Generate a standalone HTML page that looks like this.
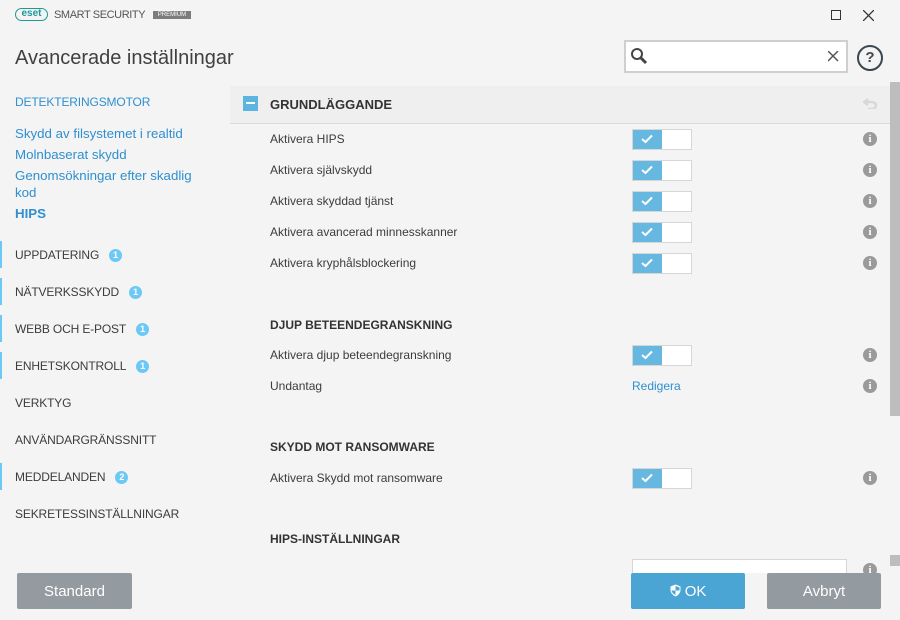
<!DOCTYPE html><html><head><meta charset="utf-8"><style>
*{margin:0;padding:0;box-sizing:border-box}
body{width:900px;height:620px;background:#f4f4f4;font-family:"Liberation Sans",sans-serif;position:relative;overflow:hidden;color:#3c3c3c}
.a{position:absolute;white-space:nowrap}
.nav{font-size:12px;color:#3c3c3c;letter-spacing:-0.15px}
.lk{font-size:13.3px;letter-spacing:0}
.blue{color:#2f8fd0}
.bar{position:absolute;left:0;width:2px;height:27px;background:#6cc8f5}
.badge{display:inline-block;width:13px;height:13px;border-radius:50%;background:#6cc8f5;color:#fff;font-size:9px;font-weight:bold;text-align:center;line-height:13px;vertical-align:1px;margin-left:10px;letter-spacing:0}
.lbl{font-size:12px;left:270px;color:#3c3c3c}
.tg{position:absolute;left:632px;width:60px;height:21px;border:1px solid #d6d6d6;background:#fff}
.tg i{position:absolute;left:0;top:0;width:29px;height:19px;background:#66b8e0}
.tg svg{position:absolute;left:8px;top:4px}
.info{position:absolute;left:863px;width:14px;height:14px;border-radius:50%;background:#9a9a9a;color:#fff;font:bold 11px "Liberation Serif",serif;text-align:center;line-height:14px}
.sec{font-size:12px;font-weight:bold;left:270px;color:#333}
.btn{position:absolute;top:573px;height:36px;color:#fff;font-size:15px;text-align:center;line-height:38px;border-radius:2px}
</style></head><body>
<div class="a" style="left:15px;top:8px;width:33px;height:13px;border:1.5px solid #1d9a98;border-radius:7px;color:#1d9a98;font:bold 10px/10px 'Liberation Sans';text-align:center">eset</div>
<div class="a" style="left:54px;top:9px;font-size:11px;color:#555;letter-spacing:-0.4px">SMART SECURITY</div>
<div class="a" style="left:153px;top:11px;width:38px;height:8px;background:#7c7c7c;color:#fff;font-size:6px;line-height:8px;text-align:center">PREMIUM</div>
<div class="a" style="left:831px;top:10px;width:10px;height:10px;border:1.3px solid #333"></div>
<svg class="a" style="left:863px;top:10px" width="11" height="11"><path d="M0 0L11 11M11 0L0 11" stroke="#333" stroke-width="1.3"/></svg>
<div class="a" style="left:15px;top:47px;font-size:20px;color:#404040">Avancerade inställningar</div>
<div class="a" style="left:624px;top:40px;width:224px;height:33px;border:2px solid #cfcfcf;background:#fff"></div>
<svg class="a" style="left:630px;top:47px" width="18" height="18"><circle cx="7" cy="7" r="5" fill="none" stroke="#444" stroke-width="2"/><path d="M11 11L16 16" stroke="#444" stroke-width="3"/></svg>
<svg class="a" style="left:828px;top:51px" width="11" height="11"><path d="M0 0L10 10M10 0L0 10" stroke="#555" stroke-width="1.5"/></svg>
<div class="a" style="left:857px;top:45px;width:26px;height:26px;border:2px solid #3a4650;border-radius:50%;text-align:center;font:bold 15px/22px 'Liberation Sans';color:#3a4650">?</div>

<div class="a nav blue" style="left:15px;top:95px">DETEKTERINGSMOTOR</div>
<div class="a nav blue lk" style="left:15px;top:126px">Skydd av filsystemet i realtid</div>
<div class="a nav blue lk" style="left:15px;top:147px">Molnbaserat skydd</div>
<div class="a nav blue lk" style="left:15px;top:168px">Genomsökningar efter skadlig</div>
<div class="a nav blue lk" style="left:15px;top:185px">kod</div>
<div class="a nav blue lk" style="left:15px;top:206px;font-weight:bold">HIPS</div>
<div class="bar" style="top:241px"></div><div class="a nav" style="left:15px;top:248px">UPPDATERING<span class="badge">1</span></div>
<div class="bar" style="top:278px"></div><div class="a nav" style="left:15px;top:285px">NÄTVERKSSKYDD<span class="badge">1</span></div>
<div class="bar" style="top:315px"></div><div class="a nav" style="left:15px;top:322px">WEBB OCH E-POST<span class="badge">1</span></div>
<div class="bar" style="top:352px"></div><div class="a nav" style="left:15px;top:359px">ENHETSKONTROLL<span class="badge">1</span></div>
<div class="a nav" style="left:15px;top:396px">VERKTYG</div>
<div class="a nav" style="left:15px;top:433px">ANVÄNDARGRÄNSSNITT</div>
<div class="bar" style="top:463px"></div><div class="a nav" style="left:15px;top:470px">MEDDELANDEN<span class="badge">2</span></div>
<div class="a nav" style="left:15px;top:507px">SEKRETESSINSTÄLLNINGAR</div>

<div class="a" style="left:230px;top:86px;width:660px;height:38px;background:#efefef;border-bottom:1px solid #dcdcdc"></div>
<div class="a" style="left:243px;top:96px;width:15px;height:15px;background:#5cb4e0"><div style="position:absolute;left:3px;top:6px;width:9px;height:2px;background:#fff"></div></div>
<div class="a" style="left:270px;top:97px;font-size:13px;font-weight:bold;color:#333">GRUNDLÄGGANDE</div>
<svg class="a" style="left:863px;top:98px" width="14" height="11"><path d="M5 1L1 4L5 7M1 4H9A4 3.5 0 0 1 9 11H5" fill="none" stroke="#d8d8d8" stroke-width="2.5"/></svg>
<div class="a" style="left:890px;top:82px;width:10px;height:334px;background:#bdbdbd"></div>
<div class="a" style="left:890px;top:555px;width:10px;height:11px;background:#bdbdbd"></div>

<div class="a lbl" style="top:132px">Aktivera HIPS</div>
<div class="a lbl" style="top:163px">Aktivera självskydd</div>
<div class="a lbl" style="top:194px">Aktivera skyddad tjänst</div>
<div class="a lbl" style="top:225px">Aktivera avancerad minnesskanner</div>
<div class="a lbl" style="top:256px">Aktivera kryphålsblockering</div>
<div class="a sec" style="top:318px">DJUP BETEENDEGRANSKNING</div>
<div class="a lbl" style="top:348px">Aktivera djup beteendegranskning</div>
<div class="a lbl" style="top:379px">Undantag</div>
<div class="a" style="left:632px;top:379px;font-size:12px;color:#2f8fd0">Redigera</div>
<div class="a sec" style="top:440px">SKYDD MOT RANSOMWARE</div>
<div class="a lbl" style="top:471px">Aktivera Skydd mot ransomware</div>
<div class="a sec" style="top:532px">HIPS-INSTÄLLNINGAR</div>
<div class="a" style="left:632px;top:559px;width:215px;height:14px;border:1px solid #d6d6d6;border-bottom:none;background:#fff"></div>

<div class="tg" style="top:129px"><i></i><svg width="12" height="10"><path d="M1 5L4.5 8L11 1.5" fill="none" stroke="#fff" stroke-width="2"/></svg></div>
<div class="tg" style="top:160px"><i></i><svg width="12" height="10"><path d="M1 5L4.5 8L11 1.5" fill="none" stroke="#fff" stroke-width="2"/></svg></div>
<div class="tg" style="top:191px"><i></i><svg width="12" height="10"><path d="M1 5L4.5 8L11 1.5" fill="none" stroke="#fff" stroke-width="2"/></svg></div>
<div class="tg" style="top:222px"><i></i><svg width="12" height="10"><path d="M1 5L4.5 8L11 1.5" fill="none" stroke="#fff" stroke-width="2"/></svg></div>
<div class="tg" style="top:253px"><i></i><svg width="12" height="10"><path d="M1 5L4.5 8L11 1.5" fill="none" stroke="#fff" stroke-width="2"/></svg></div>
<div class="tg" style="top:345px"><i></i><svg width="12" height="10"><path d="M1 5L4.5 8L11 1.5" fill="none" stroke="#fff" stroke-width="2"/></svg></div>
<div class="tg" style="top:468px"><i></i><svg width="12" height="10"><path d="M1 5L4.5 8L11 1.5" fill="none" stroke="#fff" stroke-width="2"/></svg></div>

<div class="info" style="top:132px">i</div>
<div class="info" style="top:163px">i</div>
<div class="info" style="top:194px">i</div>
<div class="info" style="top:225px">i</div>
<div class="info" style="top:256px">i</div>
<div class="info" style="top:348px">i</div>
<div class="info" style="top:379px">i</div>
<div class="info" style="top:471px">i</div>
<div class="info" style="top:563px">i</div>

<div class="btn" style="left:17px;width:115px;background:#939aa0">Standard</div>
<div class="btn" style="left:631px;width:114px;background:#4aa5d4"><svg width="11" height="13" style="vertical-align:-1px"><path d="M5.5 0.5L10.5 2.5V6C10.5 9 8 11.5 5.5 12.5C3 11.5 0.5 9 0.5 6V2.5Z" fill="#fff"/><path d="M5.5 2L9.5 3.5V6.5H5.5Z M1.5 6.5H5.5V11C3.5 10 1.8 8.5 1.5 6.5Z" fill="#4aa5d4"/></svg> OK</div>
<div class="btn" style="left:767px;width:114px;background:#939aa0">Avbryt</div>
</body></html>
